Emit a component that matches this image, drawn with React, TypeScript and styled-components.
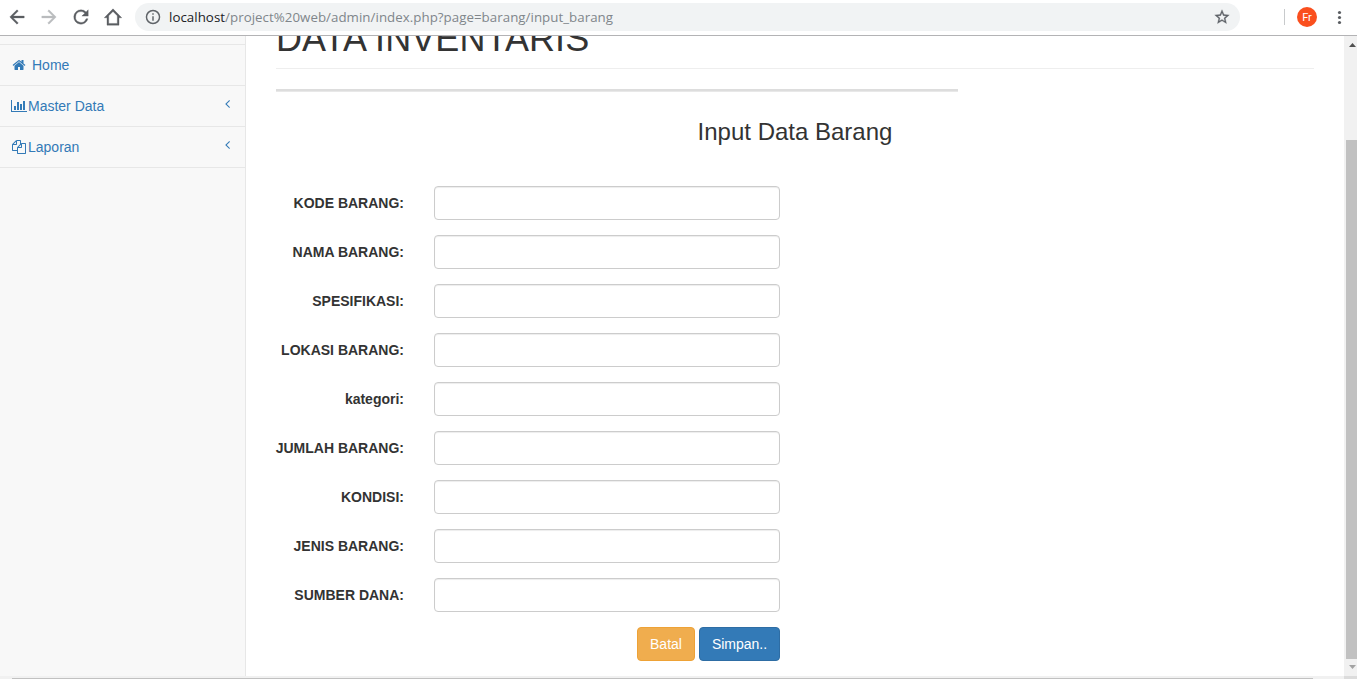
import React from 'react';
import styled, { createGlobalStyle } from 'styled-components';

const GlobalStyle = createGlobalStyle`
  *, *::before, *::after { box-sizing: border-box; }
  body {
    margin: 0;
    overflow: hidden;
    background: #fff;
    color: #333;
    font: 14px/20px "Liberation Sans", Arial, sans-serif;
  }
`;

const Window = styled.div`
  display: flex;
  flex-direction: column;
  height: 100vh;
  overflow: hidden;
`;

const Toolbar = styled.header`
  display: flex;
  align-items: center;
  flex: none;
  height: 36px;
  padding: 0 8px 1px 8px;
  border-bottom: 1px solid #b3b3b5;
`;

const NavButton = styled.span<{ $dim?: boolean }>`
  display: flex;
  flex: none;
  width: 18px;
  height: 18px;
  margin-right: 14px;
  color: ${(p) => (p.$dim ? '#babcbe' : '#5a5d61')};
  svg {
    width: 18px;
    height: 18px;
    fill: currentColor;
    stroke: currentColor;
    stroke-width: 0.4;
  }
`;

const AddressBar = styled.div`
  display: flex;
  align-items: center;
  width: 1105px;
  height: 28px;
  margin-left: -1px;
  padding: 0 10px;
  border-radius: 14px;
  background: #f1f3f4;
  svg { flex: none; width: 16px; height: 16px; fill: #5f6368; }
`;

const Url = styled.span`
  flex: 1;
  padding-left: 8px;
  color: #80868b;
  font: 13.3px/20px "Open Sans", "Noto Sans", sans-serif;
  letter-spacing: 0.04px;
  white-space: nowrap;
  b { color: #202124; font-weight: 400; }
`;

const Separator = styled.span`
  width: 1px;
  height: 16px;
  margin-left: 44px;
  background: #c8cacc;
`;

const Avatar = styled.span`
  width: 20px;
  height: 20px;
  margin-left: 12px;
  border-radius: 50%;
  background: #fa4f1e;
  color: #fff;
  font: 11px/21px Roboto, sans-serif;
  text-align: center;
`;

const MenuDots = styled.svg`
  width: 6px;
  height: 16px;
  margin-left: 19px;
  fill: #5a5d61;
`;

const Viewport = styled.div`
  display: flex;
  flex: 1;
  min-height: 0;
`;

const Sidebar = styled.nav`
  flex: none;
  width: 246px;
  padding-top: 8px;
  border-right: 1px solid #e7e7e7;
  background: #f8f8f8;
`;

const MenuList = styled.ul`
  margin: 0;
  padding: 0;
  border-top: 1px solid #e7e7e7;
  list-style: none;
`;

const MenuItem = styled.li<{ $inset: number }>`
  display: flex;
  align-items: center;
  height: 41px;
  padding: 0 15px 0 ${(p) => p.$inset}px;
  border-bottom: 1px solid #e7e7e7;
  color: #337ab7;
`;

const MenuIcon = styled.svg<{ $gap: number }>`
  flex: none;
  height: 14px;
  margin-right: ${(p) => p.$gap}px;
  fill: currentColor;
`;

const Arrow = styled.svg`
  width: 5px;
  height: 14px;
  margin: 0 0 4px auto;
  fill: currentColor;
`;

const Page = styled.main`
  flex: 1;
  min-width: 0;
  padding: 0 30px;
  overflow: hidden;
`;

const PageHeader = styled.h1`
  margin: -17px 0 20px;
  height: 50px;
  border-bottom: 1px solid #eee;
  font-size: 36px;
  font-weight: 400;
  letter-spacing: 0.08px;
  line-height: 40px;
`;

const Rule = styled.div`
  width: 682px;
  height: 3px;
  border-bottom: 1px solid #e8e8e8;
  background: #ddd;
`;

const FormTitle = styled.h3`
  margin: 26px 0 40px;
  font-size: 24px;
  font-weight: 400;
  line-height: 28px;
  text-align: center;
`;

const Form = styled.form`
  display: flex;
  flex-direction: column;
  gap: 15px;
  width: 504px;
`;

const Field = styled.label`
  display: grid;
  grid-template-columns: 128px 346px;
  column-gap: 30px;
  align-items: center;
  font-weight: 700;
  text-align: right;
  white-space: nowrap;
  span { justify-self: end; }
`;

const TextInput = styled.input`
  width: 100%;
  height: 34px;
  padding: 6px 12px;
  border: 1px solid #ccc;
  border-radius: 4px;
  background: #fff;
  box-shadow: inset 0 1px 1px rgba(0, 0, 0, 0.075);
  font: inherit;
`;

const Actions = styled.div`
  display: flex;
  justify-content: flex-end;
  gap: 4px;
`;

const Button = styled.button<{ $fill: string; $edge: string; $width: number }>`
  width: ${(p) => p.$width}px;
  height: 34px;
  padding: 0;
  border: 1px solid ${(p) => p.$edge};
  border-radius: 4px;
  background: ${(p) => p.$fill};
  color: #fff;
  font: 14px/20px "Liberation Sans", Arial, sans-serif;
`;

const VScroll = styled.div`
  display: flex;
  flex-direction: column;
  flex: none;
  width: 13px;
  padding: 7px 0 7px 2px;
  background: #f1f1f1;
  svg { flex: none; width: 11px; height: 4px; }
`;

const VThumb = styled.div`
  flex: 1;
  margin: 93px 0 6px;
  background: #c1c1c1;
`;

const HScroll = styled.div`
  display: flex;
  align-items: flex-end;
  flex: none;
  height: 3px;
  padding-left: 12px;
  background: #f1f1f1;
`;

const HThumb = styled.div`
  width: 1301px;
  height: 1px;
  background: #c1c1c1;
`;

const Corner = styled.div`
  width: 13px;
  height: 3px;
  margin-left: auto;
  background: #dcdcdc;
`;

const icons = {
  home: 'M1472 992v480q0 26-19 45t-45 19h-384v-384h-256v384h-384q-26 0-45-19t-19-45v-480q0-1 .5-3t.5-3l575-474 575 474q1 2 1 6zm223-69l-62 74q-8 9-21 11h-3q-13 0-21-7l-692-577-692 577q-12 8-24 7-13-2-21-11l-62-74q-8-10-7-23.5t11-21.5l719-599q32-26 76-26t76 26l244 204v-195q0-14 9-23t23-9h192q14 0 23 9t9 23v408l219 182q10 8 11 21.5t-7 23.5z',
  chart: 'M640 896v512h-256v-512h256zm384-512v1024h-256v-1024h256zm1024 1152v128h-2048v-1536h128v1408h1920zm-640-896v768h-256v-768h256zm384-384v1152h-256v-1152h256z',
  files: 'M1696 384q40 0 68 28t28 68v1216q0 40-28 68t-68 28h-960q-40 0-68-28t-28-68v-288h-544q-40 0-68-28t-28-68v-672q0-40 20-88t48-76l408-408q28-28 76-48t88-20h416q40 0 68 28t28 68v328q68-40 128-40h416zm-544 213l-299 299h299v-299zm-640-384l-299 299h299v-299zm196 647l316-316v-416h-384v416q0 40-28 68t-68 28h-416v640h512v-256q0-40 20-88t48-76zm956 804v-1152h-384v416q0 40-28 68t-68 28h-416v640h896z',
  angle: 'M627 544q0 13-10 23l-393 393 393 393q10 10 10 23t-10 23l-50 50q-10 10-23 10t-23-10l-466-466q-10-10-10-23t10-23l466-466q10-10 23-10t23 10l50 50q10 10 10 23z',
};

const menu = [
  { label: 'Home', icon: icons.home, box: 1792, inset: 12, gap: 6, arrow: false },
  { label: 'Master Data', icon: icons.chart, box: 2048, inset: 11, gap: 1, arrow: true },
  { label: 'Laporan', icon: icons.files, box: 1792, inset: 12, gap: 2, arrow: true },
];

const fields = [
  'KODE BARANG:',
  'NAMA BARANG:',
  'SPESIFIKASI:',
  'LOKASI BARANG:',
  'kategori:',
  'JUMLAH BARANG:',
  'KONDISI:',
  'JENIS BARANG:',
  'SUMBER DANA:',
];

const nav = [
  'M20 11H7.83l5.59-5.59L12 4l-8 8 8 8 1.41-1.41L7.83 13H20z',
  'M12 4l-1.41 1.41L16.17 11H4v2h12.17l-5.58 5.59L12 20l8-8z',
  'M17.65 6.35A7.96 7.96 0 0 0 12 4a8 8 0 1 0 7.73 10h-2.08A6 6 0 1 1 12 6c1.66 0 3.14.69 4.22 1.78L13 11h7V4z',
  'M12 2.5 1.8 12.9H5V21.5h14v-8.6h3.2zm0 3 5 5.1v8.9H7v-8.9z',
];

export default function App() {
  return (
    <Window>
      <GlobalStyle />
      <Toolbar>
        {nav.map((d, i) => (
          <NavButton key={d} $dim={i === 1}>
            <svg viewBox={i === 3 ? '1.5 1.5 21 21' : '2 2 20 20'}><path d={d} /></svg>
          </NavButton>
        ))}
        <AddressBar>
          <svg viewBox="1 1 22 22">
            <path d="M11 7h2v2h-2zm0 4h2v6h-2zm1-9a10 10 0 1 0 0 20 10 10 0 0 0 0-20zm0 18a8 8 0 1 1 0-16 8 8 0 0 1 0 16z" />
          </svg>
          <Url><b>localhost</b>/project%20web/admin/index.php?page=barang/input_barang</Url>
          <svg viewBox="1 1 22 22" stroke="#5f6368" strokeWidth="0.4">
            <path d="M22 9.24l-7.19-.62L12 2 9.19 8.63 2 9.24l5.46 4.73L5.82 21 12 17.27 18.18 21l-1.63-7.03zM12 15.4l-3.76 2.27 1-4.28-3.32-2.88 4.38-.38L12 6.1l1.71 4.04 4.38.38-3.32 2.88 1 4.28z" />
          </svg>
        </AddressBar>
        <Separator />
        <Avatar>Fr</Avatar>
        <MenuDots viewBox="0 0 6 16">
          <circle cx="3.5" cy="3.5" r="1.6" />
          <circle cx="3.5" cy="8.5" r="1.6" />
          <circle cx="3.5" cy="13.5" r="1.6" />
        </MenuDots>
      </Toolbar>
      <Viewport>
        <Sidebar>
          <MenuList>
            {menu.map((m) => (
              <MenuItem key={m.label} $inset={m.inset}>
                <MenuIcon $gap={m.gap} width={(m.box / 1792) * 14} viewBox={`0 0 ${m.box} 1792`}>
                  <path d={m.icon} />
                </MenuIcon>
                {m.label}
                {m.arrow && <Arrow viewBox="0 64 640 1792"><path d={icons.angle} /></Arrow>}
              </MenuItem>
            ))}
          </MenuList>
        </Sidebar>
        <Page>
          <PageHeader>DATA INVENTARIS</PageHeader>
          <Rule />
          <FormTitle>Input Data Barang</FormTitle>
          <Form>
            {fields.map((f) => (
              <Field key={f}>
                <span>{f}</span>
                <TextInput type="text" />
              </Field>
            ))}
            <Actions>
              <Button type="button" $fill="#f0ad4e" $edge="#eea236" $width={58}>Batal</Button>
              <Button type="button" $fill="#337ab7" $edge="#2e6da4" $width={81}>Simpan..</Button>
            </Actions>
          </Form>
        </Page>
        <VScroll>
          <svg viewBox="0 0 11 4"><path d="M3 4 6.5 0 10 4z" fill="#505050" /></svg>
          <VThumb />
          <svg viewBox="0 0 11 4"><path d="M3 0h7L6.5 4z" fill="#a3a3a3" /></svg>
        </VScroll>
      </Viewport>
      <HScroll>
        <HThumb />
        <Corner />
      </HScroll>
    </Window>
  );
}
